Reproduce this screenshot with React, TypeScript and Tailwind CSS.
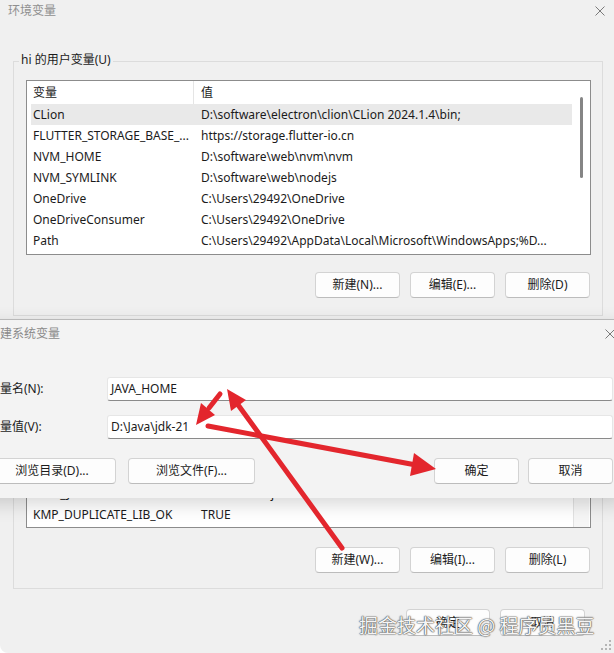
import React from "react";

type Row = [string, string];

const userRows: Row[] = [
  ["CLion", "D:\\software\\electron\\clion\\CLion 2024.1.4\\bin;"],
  ["FLUTTER_STORAGE_BASE_...", "https://storage.flutter-io.cn"],
  ["NVM_HOME", "D:\\software\\web\\nvm\\nvm"],
  ["NVM_SYMLINK", "D:\\software\\web\\nodejs"],
  ["OneDrive", "C:\\Users\\29492\\OneDrive"],
  ["OneDriveConsumer", "C:\\Users\\29492\\OneDrive"],
  ["Path", "C:\\Users\\29492\\AppData\\Local\\Microsoft\\WindowsApps;%D..."],
];

const systemRows: Row[] = [
  ["ComSpec", "C:\\Windows\\system32\\cmd.exe"],
  ["DriverData", "C:\\Windows\\System32\\Drivers\\DriverData"],
  ["FLUTTER_HOME", "D:\\software\\flutter"],
  ["GRADLE_USER_HOME", "D:\\software\\gradle\\repo"],
  ["HUSKY", "0"],
  ["IDEA_JDK", "D:\\software\\jdk"],
  ["KMP_DUPLICATE_LIB_OK", "TRUE"],
  ["NUMBER_OF_PROCESSORS", "16"],
];

function CloseIcon({ className }: { className?: string }) {
  return (
    <svg width="10" height="10" viewBox="0 0 10 10" className={className}>
      <path d="M0.5 0.5 L9.5 9.5 M9.5 0.5 L0.5 9.5" stroke="#7a7a7a" strokeWidth="1" />
    </svg>
  );
}

function WinButton({ children, className = "" }: { children: React.ReactNode; className?: string }) {
  return (
    <button
      className={`flex items-center justify-center rounded-[4px] border border-[#d3d3d3] border-b-[#bcbcbc] bg-[#fdfdfd] text-[12px] text-[#1b1b1b] ${className}`}
    >
      {children}
    </button>
  );
}

function ListBox({ rows, className, thumbTop }: { rows: Row[]; className: string; thumbTop: boolean }) {
  return (
    <div className={`ml-[12px] flex w-[565px] overflow-hidden border border-[#8c8c8c] bg-white ${className}`}>
      <div className="flex-1 overflow-hidden">
        <div className="ml-[4px] flex h-[23px] items-center">
          <div className="h-full w-[163px] border-r border-[#e5e5e5] pl-[2px] leading-[23px]">变量</div>
          <div className="pl-[7px]">值</div>
        </div>
        {rows.map(([k, v], i) => (
          <div
            key={k}
            className={`ml-[4px] flex h-[21px] items-center whitespace-nowrap ${
              thumbTop && i === 0 ? "bg-[#e9e9e9]" : ""
            }`}
          >
            <div className="w-[163px] overflow-hidden pl-[2px]">{k}</div>
            <div className="overflow-hidden pl-[7px]">{v}</div>
          </div>
        ))}
      </div>
      <div className="flex w-[18px] flex-col items-center">
        {thumbTop ? (
          <div className="mt-[16px] h-[81px] w-[3px] rounded-full bg-[#858585]" />
        ) : (
          <div className="mt-auto h-[36px] w-[16px] border-l border-[#e2e2e2] bg-[#f6f6f6]" />
        )}
      </div>
    </div>
  );
}

function Arrows() {
  const red = "#e3262d";
  return (
    <svg className="pointer-events-none absolute left-0 top-0" width="614" height="653" viewBox="0 0 614 653">
      {/* from the bottom button up to the name field */}
      <line x1="342" y1="548" x2="236" y2="402" stroke={red} strokeWidth="5" strokeLinecap="round" />
      <polygon points="227,389 246,400 231,411" fill={red} />
      {/* short arrow pointing at the value */}
      <line x1="220" y1="394" x2="209" y2="408" stroke={red} strokeWidth="5" strokeLinecap="round" />
      <polygon points="196,425 215,415 201,403" fill={red} />
      {/* value to OK button */}
      <line x1="208" y1="426" x2="416" y2="465" stroke={red} strokeWidth="5" strokeLinecap="round" />
      <polygon points="436,469 414,453 410,476" fill={red} />
    </svg>
  );
}

function ResizeGrip() {
  const dots = [
    [10, 2],
    [10, 6],
    [6, 6],
    [10, 10],
    [6, 10],
    [2, 10],
  ];
  return (
    <svg width="12" height="12" viewBox="0 0 12 12" className="absolute bottom-[2px] right-[2px]">
      {dots.map(([x, y]) => (
        <rect key={`${x}-${y}`} x={x - 1} y={y - 1} width="2" height="2" fill="#b5b5b5" />
      ))}
    </svg>
  );
}

export default function App() {
  return (
    <div className="relative h-[653px] w-[614px] overflow-hidden bg-white font-['Noto_Sans','Noto_Sans_CJK_SC',sans-serif] text-[12px] text-[#1b1b1b]">
      {/* 环境变量 window */}
      <div className="flex h-full flex-col rounded-bl-[8px] bg-[#f0f0f0]">
        <div className="flex h-[21px] items-center justify-between pl-[8px] pr-[9px] text-[#8f8f8f]">
          <span>环境变量</span>
          <CloseIcon />
        </div>

        <div className="ml-[13px] mt-[40px] w-[590px] border border-[#dcdcdc]">
          <div className="-mt-[10px] ml-[5px] w-fit bg-[#f0f0f0] px-[2px] leading-[16px]">hi 的用户变量(U)</div>
          <ListBox rows={userRows} className="mt-[12px] h-[175px]" thumbTop />
          <div className="mt-[17px] flex justify-end gap-[10px] pb-[17px] pr-[12px]">
            <WinButton className="h-[26px] w-[85px]">新建(N)...</WinButton>
            <WinButton className="h-[26px] w-[85px]">编辑(E)...</WinButton>
            <WinButton className="h-[26px] w-[85px]">删除(D)</WinButton>
          </div>
        </div>

        <div className="ml-[13px] mt-[20px] w-[590px] border border-[#dcdcdc]">
          <div className="-mt-[10px] ml-[5px] w-fit bg-[#f0f0f0] px-[2px] leading-[16px]">系统变量(S)</div>
          <ListBox rows={systemRows} className="mt-[11px] h-[174px]" thumbTop={false} />
          <div className="mt-[19px] flex justify-end gap-[10px] pb-[15px] pr-[12px]">
            <WinButton className="h-[26px] w-[85px]">新建(W)...</WinButton>
            <WinButton className="h-[26px] w-[85px]">编辑(I)...</WinButton>
            <WinButton className="h-[26px] w-[85px]">删除(L)</WinButton>
          </div>
        </div>

        <div className="mt-[20px] flex justify-end gap-[10px] pr-[29px]">
          <WinButton className="h-[27px] w-[84px]">确定</WinButton>
          <WinButton className="h-[27px] w-[85px]">取消</WinButton>
        </div>
      </div>
      <ResizeGrip />

      {/* 新建系统变量 dialog */}
      <div className="absolute left-[-24px] top-[319px] flex h-[179px] w-[649px] flex-col border-t border-[#b9b9b9] bg-[#f3f3f3] px-[12px] shadow-[0_6px_18px_rgba(0,0,0,0.16)]">
        <div className="flex h-[28px] items-center justify-between text-[#8a8a8a]">
          <span>新建系统变量</span>
          <CloseIcon className="-mr-[2px]" />
        </div>
        <div className="mt-[29px] flex h-[24px] items-center">
          <span className="w-[119px]">变量名(N):</span>
          <div className="flex h-full flex-1 items-center rounded-[3px] border border-[#e6e6e6] border-b-[#8a8a8a] bg-white pl-[3px]">
            JAVA_HOME
          </div>
        </div>
        <div className="mt-[14px] flex h-[24px] items-center">
          <span className="w-[119px]">变量值(V):</span>
          <div className="flex h-full flex-1 items-center rounded-[3px] border border-[#e6e6e6] border-b-[#8a8a8a] bg-white pl-[3px]">
            D:\Java\jdk-21
          </div>
        </div>
        <div className="mt-[19px] flex h-[26px] items-center">
          <WinButton className="h-full w-[128px]">浏览目录(D)...</WinButton>
          <WinButton className="ml-[12px] h-full w-[127px]">浏览文件(F)...</WinButton>
          <div className="flex-1" />
          <WinButton className="h-full w-[85px]">确定</WinButton>
          <WinButton className="ml-[9px] h-full w-[85px]">取消</WinButton>
        </div>
      </div>

      <Arrows />

      <div className="absolute left-[359px] top-[612px] whitespace-nowrap font-['Noto_Sans_CJK_SC',sans-serif] text-[19px] leading-[26px] text-[#f5f5f5] [text-shadow:0_0_1px_#444,0_0_1px_#444,0_0_2px_#777]">
        掘金技术社区 @ 程序员黑豆
      </div>
    </div>
  );
}
